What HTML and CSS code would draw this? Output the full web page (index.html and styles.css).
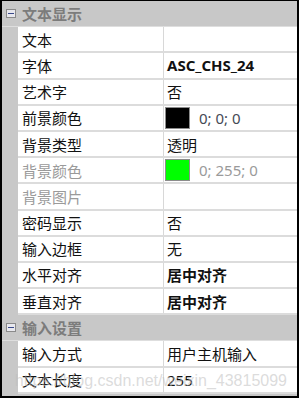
FILE: index.html
```html
<!DOCTYPE html>
<html lang="zh">
<head>
<meta charset="utf-8">
<link rel="stylesheet" href="styles.css">
</head>
<body>
<div class="panel">
  <div class="head"><span class="toggle"><span class="minus"></span></span><span class="head-title">文本显示</span></div>
  <div class="row"><div class="name">文本</div><div class="val"></div></div>
  <div class="row"><div class="name">字体</div><div class="val bold">ASC_CHS_24</div></div>
  <div class="row"><div class="name">艺术字</div><div class="val">否</div></div>
  <div class="row"><div class="name">前景颜色</div><div class="val"><span class="swatch black"></span><span class="rgb">0; 0; 0</span></div></div>
  <div class="row"><div class="name">背景类型</div><div class="val">透明</div></div>
  <div class="row"><div class="name dim">背景颜色</div><div class="val"><span class="swatch green"></span><span class="rgb dim">0; 255; 0</span></div></div>
  <div class="row"><div class="name dim">背景图片</div><div class="val"></div></div>
  <div class="row"><div class="name">密码显示</div><div class="val">否</div></div>
  <div class="row"><div class="name">输入边框</div><div class="val">无</div></div>
  <div class="row"><div class="name">水平对齐</div><div class="val bold">居中对齐</div></div>
  <div class="row"><div class="name">垂直对齐</div><div class="val bold">居中对齐</div></div>
  <div class="head"><span class="toggle"><span class="minus"></span></span><span class="head-title">输入设置</span></div>
  <div class="row"><div class="name">输入方式</div><div class="val">用户主机输入</div></div>
  <div class="row"><div class="name">文本长度</div><div class="val">255</div></div>
  <div class="watermark">https://blog.csdn.net/weixin_43815099</div>
</div>
</body>
</html>
```
FILE: styles.css
```css
html, body {
  margin: 0;
  padding: 0;
  background: #ffffff;
}
.panel {
  position: relative;
  box-sizing: border-box;
  width: 299px;
  height: 398px;
  border: 2px solid #000;
  border-top-width: 1px;
  background: #c8c8c8;
  font-family: "Noto Sans", "Noto Sans CJK SC", sans-serif;
  font-size: 15px;
  color: #111;
  overflow: hidden;
}
.head {
  height: 26.2px;
  box-sizing: border-box;
  display: flex;
  align-items: center;
  border-bottom: 1px solid #dedede;
}
.toggle {
  box-sizing: border-box;
  width: 10px;
  height: 9px;
  margin-left: 4px;
  margin-right: 6px;
  border: 1px solid #8a8a8a;
  background: #e8e8ee;
  display: flex;
  align-items: center;
  justify-content: center;
}
.minus {
  width: 6px;
  height: 1px;
  background: #3a4a8a;
}
.head-title {
  font-weight: bold;
  color: #7c7c7c;
}
.row {
  height: 26.2px;
  box-sizing: border-box;
  margin-left: 16px;
  background: #fff;
  border-bottom: 2px solid #dcdcdc;
  display: grid;
  grid-template-columns: 146px 1fr;
}
.name {
  padding-left: 4px;
  border-right: 1px solid #d8d8d8;
  display: flex;
  align-items: center;
  white-space: nowrap;
}
.val {
  padding-left: 3px;
  display: flex;
  align-items: center;
  white-space: nowrap;
}
.bold {
  font-weight: bold;
}
.dim {
  color: #9a9a9a;
}
.swatch {
  box-sizing: border-box;
  width: 25px;
  height: 22px;
  border: 1px solid #8c8c8c;
  margin-left: -2px;
  margin-right: 9px;
}
.swatch.black { background: #000; }
.swatch.green { background: #00ff00; }
.rgb {
  color: #454a55;
}
.rgb.dim {
  color: #9a9a9a;
}
.watermark {
  position: absolute;
  right: 10px;
  bottom: 6px;
  font-family: "Liberation Sans", Arial, sans-serif;
  font-size: 16px;
  color: rgba(190, 190, 190, 0.55);
  white-space: nowrap;
  pointer-events: none;
}
```
